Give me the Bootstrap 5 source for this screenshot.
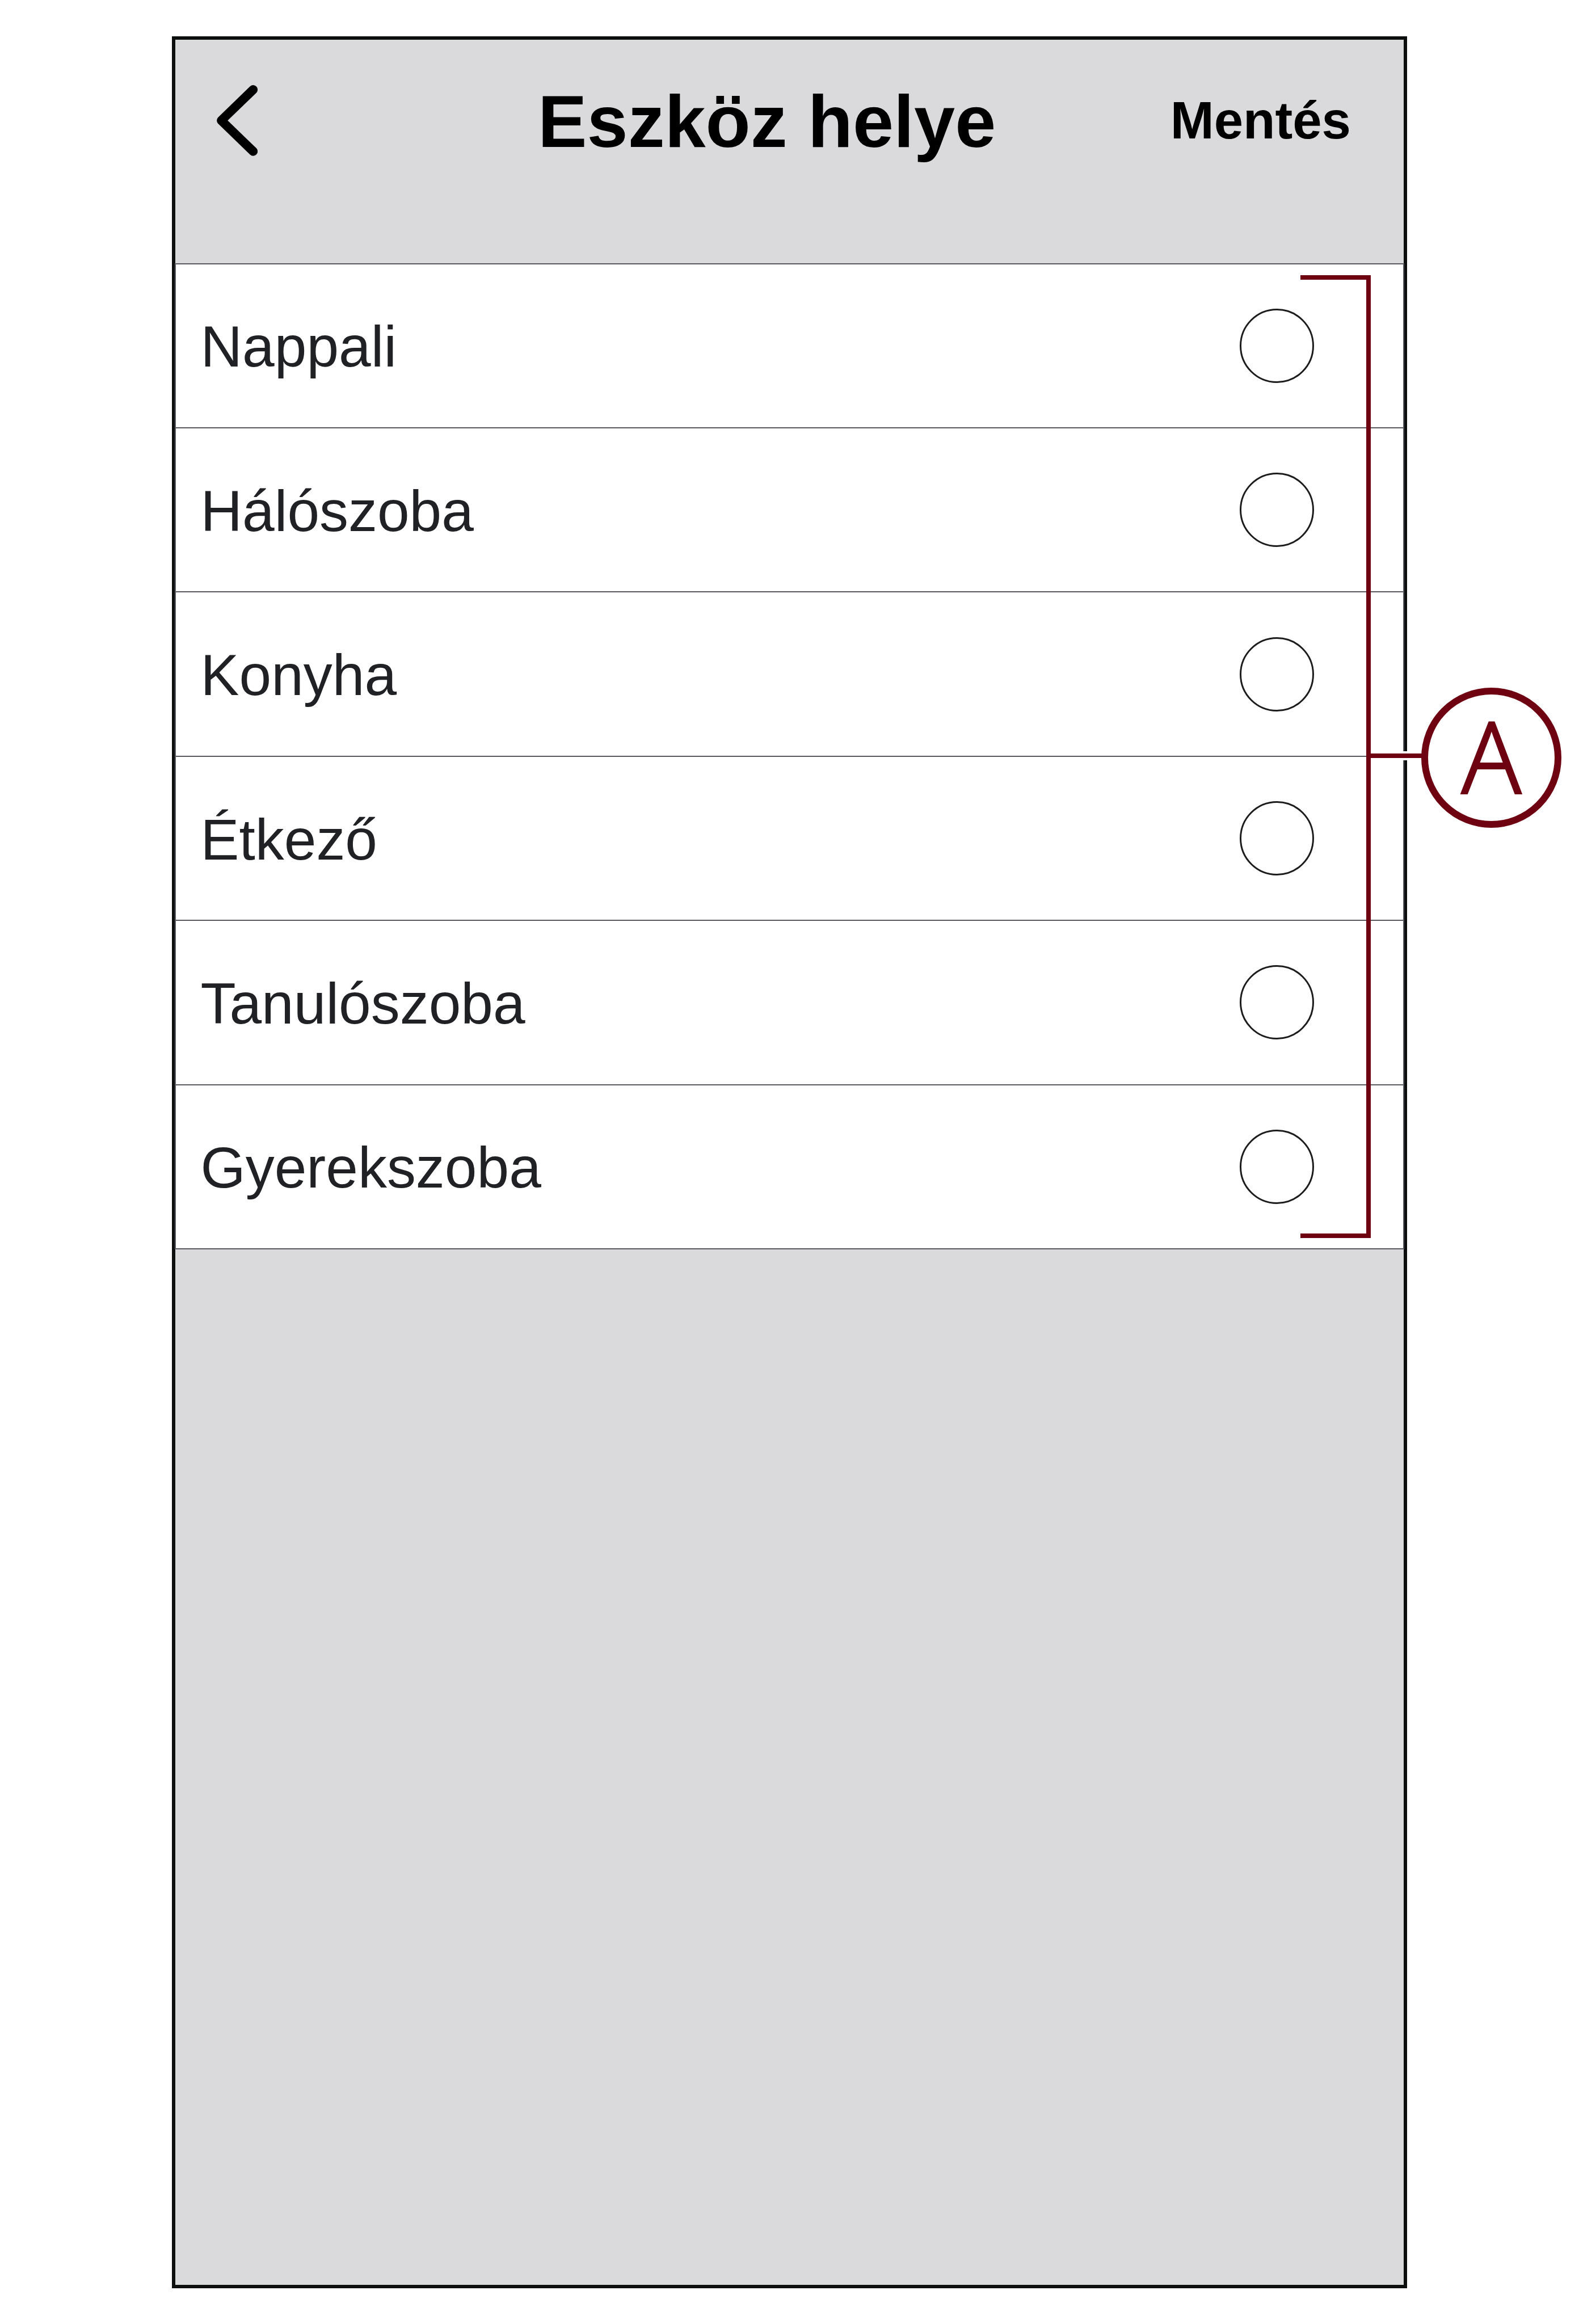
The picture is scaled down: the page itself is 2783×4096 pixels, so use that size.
<!DOCTYPE html>
<html lang="hu">
  <head>
    <meta charset="UTF-8" />
    <title>Eszköz helye</title>
    <meta name="viewport" content="width=device-width, initial-scale=1" />
    <link
      href="https://cdn.jsdelivr.net/npm/bootstrap@5.3.3/dist/css/bootstrap.min.css"
      rel="stylesheet"
    />
    <style>
      body {
        font-family: "Liberation Sans", Arial, sans-serif;
        background: #fff;
      }
      .stage {
        padding: 64px 0 0 303px;
      }
      .phone {
        width: 2177px;
        height: 3969px;
        border: 6px solid #0d0f0f;
        background: #dadadc;
      }
      .topbar {
        height: 393.5px;
        padding: 0 93px 108px 73px;
        color: #000;
      }
      .back-icon {
        width: 72px;
        height: 125px;
      }
      .screen-title {
        font-size: 129.7px;
        line-height: 150px;
        margin: 3px 0 0 494px;
      }
      .save-btn {
        font-size: 92.4px;
        line-height: 110px;
        padding-bottom: 1px;
      }
      .rooms {
        margin: 0 -1px;
        border: 2px solid #58585f;
        border-bottom: 0;
        background: #fff;
      }
      .room {
        height: 289.45px;
        padding: 0 157px 0 43.5px;
        border-bottom: 2px solid #58585f;
        color: #202124;
        font-size: 101.9px;
        line-height: 120px;
      }
      .room span {
        padding-top: 4px;
      }
      .room .form-check-input {
        width: 131px;
        height: 131px;
        margin: 0;
        border: 3px solid #1c1c1e;
      }

      /* callout drawn over the list */
      .bracket {
        left: 1982px;
        top: 19.5px;
        width: 124px;
        height: 1697px;
        border: 8px solid #6e0210;
        border-left: 0;
      }
      .leader {
        left: 2106px;
        top: 858.5px;
        width: 95px;
        height: 16px;
        background: #6e0210;
        border: solid #fff;
        border-width: 4px 0;
      }
      .marker {
        left: 2195px;
        top: 746.5px;
        width: 247px;
        height: 247px;
        border: 12px solid #6e0210;
        background: #fff;
        color: #6e0210;
        font-family: "Open Sans", sans-serif;
        font-weight: 300;
        font-size: 173px;
        line-height: 214px;
        -webkit-text-stroke: 4px #6e0210;
      }
    </style>
  </head>
  <body>
    <main class="stage">
      <div class="phone">
        <header class="topbar d-flex align-items-center">
          <svg class="back-icon" viewBox="0 0 72 125" role="button">
            <path
              d="M64.2 8L8 62.4L64.2 116.8"
              fill="none"
              stroke="#000"
              stroke-width="15.8"
              stroke-linecap="round"
              stroke-linejoin="round"
            />
          </svg>
          <h1 class="screen-title fw-bold text-nowrap">Eszköz helye</h1>
          <a class="save-btn ms-auto fw-bold text-reset text-decoration-none">Mentés</a>
        </header>

        <div class="rooms position-relative">
          <label class="room d-flex align-items-center justify-content-between">
            <span>Nappali</span>
            <input class="form-check-input" type="radio" name="room" />
          </label>
          <label class="room d-flex align-items-center justify-content-between">
            <span>Hálószoba</span>
            <input class="form-check-input" type="radio" name="room" />
          </label>
          <label class="room d-flex align-items-center justify-content-between">
            <span>Konyha</span>
            <input class="form-check-input" type="radio" name="room" />
          </label>
          <label class="room d-flex align-items-center justify-content-between">
            <span>Étkező</span>
            <input class="form-check-input" type="radio" name="room" />
          </label>
          <label class="room d-flex align-items-center justify-content-between">
            <span>Tanulószoba</span>
            <input class="form-check-input" type="radio" name="room" />
          </label>
          <label class="room d-flex align-items-center justify-content-between">
            <span>Gyerekszoba</span>
            <input class="form-check-input" type="radio" name="room" />
          </label>

          <div class="bracket position-absolute"></div>
          <div class="leader position-absolute"></div>
          <div class="marker position-absolute rounded-circle text-center">A</div>
        </div>
      </div>
    </main>

    <script src="https://cdn.jsdelivr.net/npm/bootstrap@5.3.3/dist/js/bootstrap.bundle.min.js"></script>
  </body>
</html>
